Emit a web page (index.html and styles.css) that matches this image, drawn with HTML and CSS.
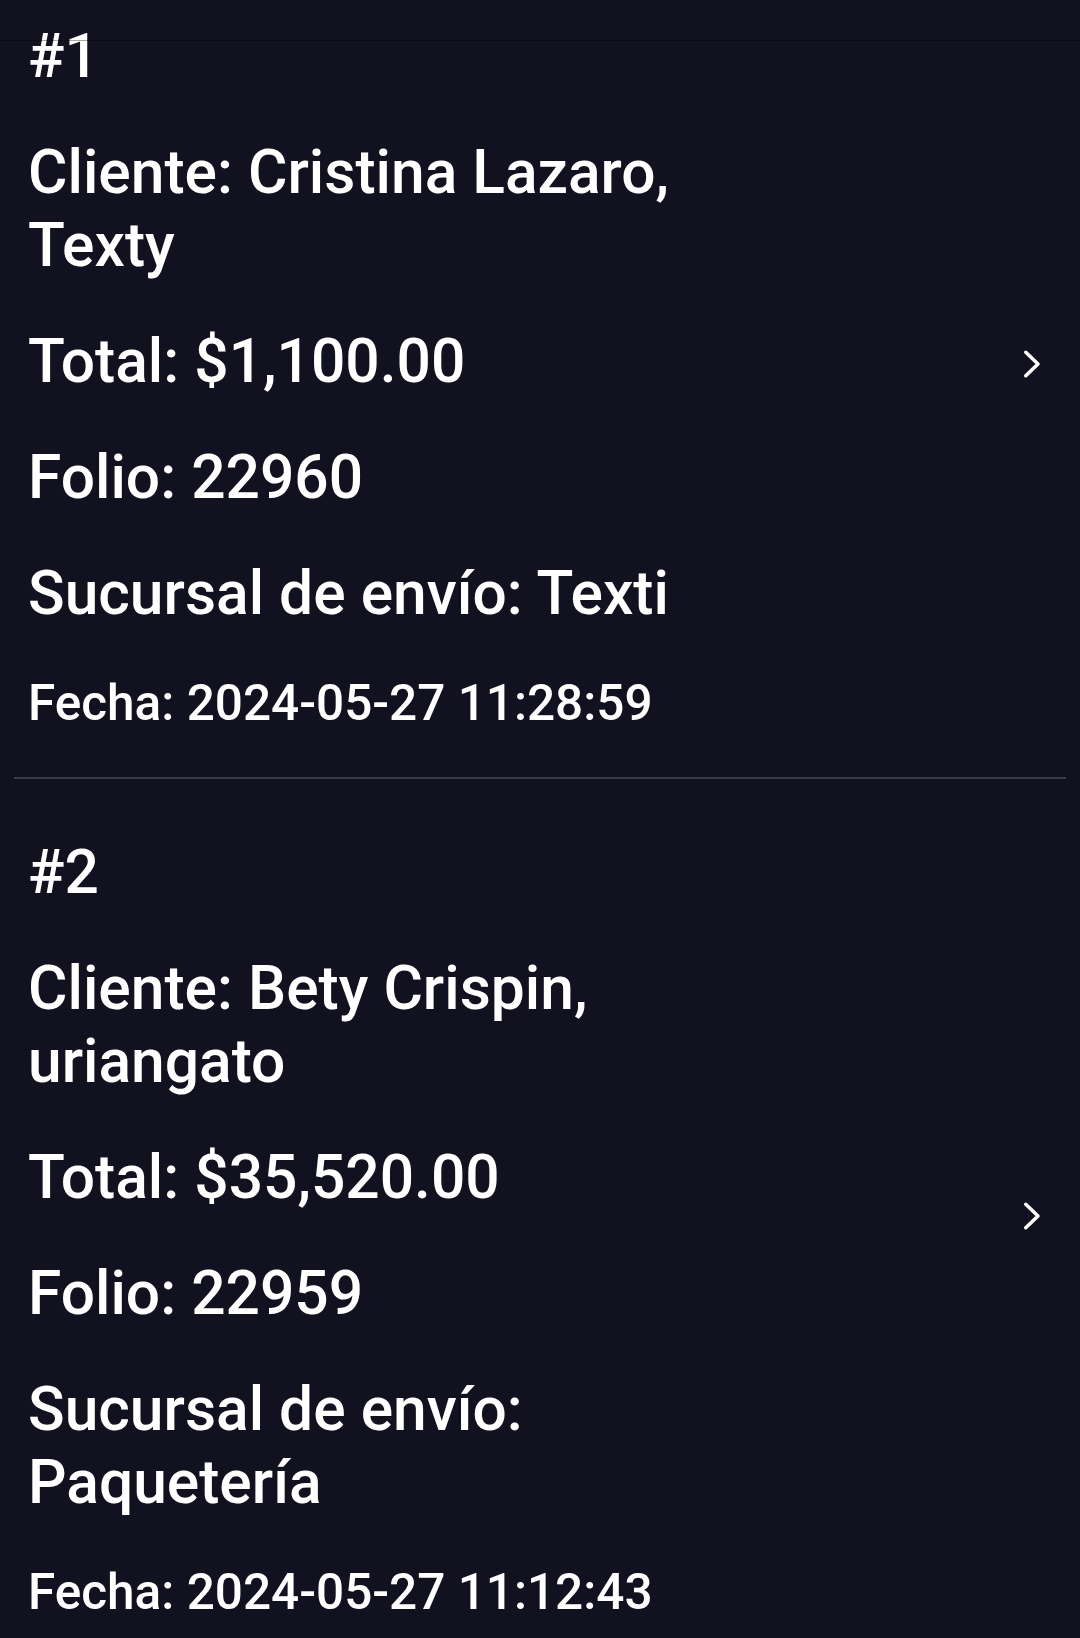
FILE: index.html
```html
<!DOCTYPE html>
<html lang="es">
<head>
<meta charset="utf-8">
<title>Pedidos</title>
<link rel="stylesheet" href="styles.css">
</head>
<body>
<div class="screen">
  <div class="topline"></div>
  <div class="list">
    <div class="item">
      <div class="info">
        <p class="line">#1</p>
        <p class="line">Cliente: Cristina Lazaro, Texty</p>
        <p class="line">Total: $1,100.00</p>
        <p class="line">Folio: 22960</p>
        <p class="line">Sucursal de envío: Texti</p>
        <p class="line small">Fecha: 2024-05-27 11:28:59</p>
      </div>
      <svg class="chev" width="20" height="32" viewBox="0 0 20 32"><polyline points="3.75,4.25 16,16 3.75,27.75" fill="none" stroke="#ffffff" stroke-width="3.5" stroke-linecap="round" stroke-linejoin="round"/></svg>
    </div>
    <div class="item">
      <div class="info">
        <p class="line">#2</p>
        <p class="line">Cliente: Bety Crispin, uriangato</p>
        <p class="line">Total: $35,520.00</p>
        <p class="line">Folio: 22959</p>
        <p class="line">Sucursal de envío: Paquetería</p>
        <p class="line small">Fecha: 2024-05-27 11:12:43</p>
      </div>
      <svg class="chev" width="20" height="32" viewBox="0 0 20 32"><polyline points="3.75,4.25 16,16 3.75,27.75" fill="none" stroke="#ffffff" stroke-width="3.5" stroke-linecap="round" stroke-linejoin="round"/></svg>
    </div>
  </div>
</div>
</body>
</html>
```

FILE: styles.css
```css
html, body {
  margin: 0;
  padding: 0;
  background: #11111f;
}
body {
  font-family: Roboto, "Noto Sans", "Liberation Sans", sans-serif;
  color: #ffffff;
}
.screen {
  position: relative;
  width: 1080px;
  height: 1638px;
  overflow: hidden;
  background: #11111f;
}
.topline {
  position: absolute;
  left: 0;
  top: 0;
  width: 100%;
  height: 40px;
  border-bottom: 1px solid rgba(0, 0, 0, 0.35);
  z-index: 2;
}
.list {
  margin-top: -36.5px;
  padding: 0 14px 0 14px;
}
.item {
  display: flex;
  align-items: center;
  justify-content: space-between;
  padding: 57.5px 0 44px 14px;
  border-bottom: 2px solid #3c3c49;
}
.info {
  width: 720px;
  display: flex;
  flex-direction: column;
  gap: 43.5px;
}
.line {
  margin: 0;
  font-size: 60.5px;
  line-height: 72.6px;
  font-weight: 500;
}
.line.small {
  font-size: 49.5px;
  line-height: 59.4px;
}
.chev {
  flex: none;
  margin-right: 24px;
  margin-bottom: 27px;
}
```
